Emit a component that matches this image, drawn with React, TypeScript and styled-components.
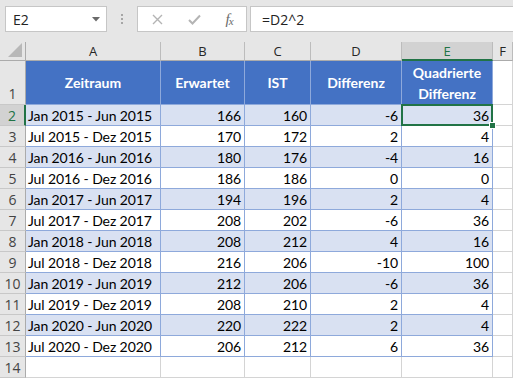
import styled, { createGlobalStyle } from "styled-components";

const GlobalStyle = createGlobalStyle`
  html, body {
    margin: 0;
    padding: 0;
    background: #ffffff;
    overflow: hidden;
  }
`;

const rows: [string, number, number, number, number][] = [
  ["Jan 2015 - Jun 2015", 166, 160, -6, 36],
  ["Jul 2015 - Dez 2015", 170, 172, 2, 4],
  ["Jan 2016 - Jun 2016", 180, 176, -4, 16],
  ["Jul 2016 - Dez 2016", 186, 186, 0, 0],
  ["Jan 2017 - Jun 2017", 194, 196, 2, 4],
  ["Jul 2017 - Dez 2017", 208, 202, -6, 36],
  ["Jan 2018 - Jun 2018", 208, 212, 4, 16],
  ["Jul 2018 - Dez 2018", 216, 206, -10, 100],
  ["Jan 2019 - Jun 2019", 212, 206, -6, 36],
  ["Jul 2019 - Dez 2019", 208, 210, 2, 4],
  ["Jan 2020 - Jun 2020", 220, 222, 2, 4],
  ["Jul 2020 - Dez 2020", 206, 212, 6, 36],
];

const columns = ["A", "B", "C", "D", "E", "F"];

// page

const Sheet = styled.div`
  width: 513px;
  height: 378px;
  display: flex;
  flex-direction: column;
  background: #ffffff;
  overflow: hidden;
`;

// formula bar

const FormulaBar = styled.div`
  display: flex;
  align-items: flex-start;
  height: 42px;
  padding: 6px 0 0 5px;
  box-sizing: border-box;
  background: #e6e6e6;
  font-family: "Open Sans", "DejaVu Sans", sans-serif;
`;

const NameBox = styled.div`
  display: flex;
  align-items: center;
  justify-content: space-between;
  width: 102px;
  height: 26px;
  box-sizing: border-box;
  padding: 0 6px 0 7px;
  background: #ffffff;
  border: 1px solid #c6c6c6;
  color: #222;
  font-size: 14px;
`;

const Grip = styled.div`
  display: flex;
  flex-direction: column;
  justify-content: center;
  align-items: center;
  gap: 2px;
  width: 30px;
  height: 26px;
`;

const GripDot = styled.span`
  width: 2px;
  height: 2px;
  background: #a6a6a6;
`;

const FxBox = styled.div`
  display: flex;
  align-items: center;
  width: 110px;
  height: 26px;
  box-sizing: border-box;
  background: #ffffff;
  border: 1px solid #c6c6c6;
`;

const FxSlot = styled.div<{ $width: number }>`
  display: flex;
  align-items: center;
  justify-content: center;
  width: ${(p) => p.$width}px;
  height: 100%;
`;

const FxLabel = styled.span`
  font-family: "Liberation Serif", "DejaVu Serif", serif;
  font-style: italic;
  font-size: 15px;
  color: #6b6b6b;
  letter-spacing: -1px;
  sub {
    font-size: 11px;
    vertical-align: -1px;
  }
`;

const FormulaInput = styled.div`
  flex: 1;
  display: flex;
  align-items: center;
  height: 26px;
  margin-left: 3px;
  padding-left: 11px;
  box-sizing: border-box;
  background: #ffffff;
  border: 1px solid #c6c6c6;
  border-right: none;
  color: #222;
  font-size: 14px;
`;

// grid

const Grid = styled.div`
  display: grid;
  grid-template-columns: 26px 135px 84px 66px 91px 91px 20px;
  grid-template-rows: 19px 44px repeat(13, 21px);
`;

const Corner = styled.div`
  background: #e6e6e6;
  border-right: 1px solid #ababab;
  border-bottom: 1px solid #ababab;
  box-sizing: border-box;
  display: flex;
  align-items: flex-end;
  justify-content: flex-end;
  padding: 0 3px 3px 0;
`;

const ColHeader = styled.div<{ $active?: boolean }>`
  display: flex;
  align-items: center;
  justify-content: center;
  box-sizing: border-box;
  background: ${(p) => (p.$active ? "#d2d2d2" : "#e6e6e6")};
  color: ${(p) => (p.$active ? "#217346" : "#262626")};
  border-right: 1px solid #bcbcbc;
  border-bottom: ${(p) => (p.$active ? "2px solid #217346" : "1px solid #ababab")};
  font-family: "Open Sans", "DejaVu Sans", sans-serif;
  font-size: 13px;
  padding-top: ${(p) => (p.$active ? "1px" : "0")};
`;

const RowHeader = styled.div<{ $active?: boolean; $bottom?: boolean }>`
  display: flex;
  align-items: ${(p) => (p.$bottom ? "flex-end" : "center")};
  justify-content: center;
  box-sizing: border-box;
  padding-bottom: ${(p) => (p.$bottom ? "1px" : "0")};
  background: ${(p) => (p.$active ? "#d2d2d2" : "#e6e6e6")};
  color: ${(p) => (p.$active ? "#217346" : "#444444")};
  border-right: ${(p) => (p.$active ? "2px solid #217346" : "1px solid #ababab")};
  border-bottom: 1px solid #c8c8c8;
  font-family: "Open Sans", "DejaVu Sans", sans-serif;
  font-size: 14px;
`;

const HeadCell = styled.div`
  display: flex;
  align-items: center;
  justify-content: center;
  text-align: center;
  box-sizing: border-box;
  background: #4472c4;
  color: #ffffff;
  border-right: 1px solid #8ea9db;
  border-bottom: 1px solid #8ea9db;
  font-family: Lato, "Liberation Sans", sans-serif;
  font-weight: 700;
  font-size: 14px;
  line-height: 21px;
`;

const Cell = styled.div<{ $band?: boolean; $num?: boolean; $selected?: boolean }>`
  position: relative;
  display: flex;
  align-items: center;
  justify-content: ${(p) => (p.$num ? "flex-end" : "flex-start")};
  box-sizing: border-box;
  padding: 0 3px 0 2px;
  background: ${(p) => (p.$band ? "#d9e1f2" : "#ffffff")};
  color: #000000;
  border-right: 1px solid #8ea9db;
  border-bottom: 1px solid #8ea9db;
  font-family: Lato, "Liberation Sans", sans-serif;
  font-size: 14px;
  letter-spacing: -0.1px;
  white-space: nowrap;
  ${(p) =>
    p.$selected &&
    `
    &::after {
      content: "";
      position: absolute;
      inset: -1px -1px -1px -1px;
      border: 2px solid #217346;
    }
  `}
`;

const FillHandle = styled.span`
  position: absolute;
  right: -4px;
  bottom: -4px;
  width: 5px;
  height: 5px;
  background: #217346;
  border: 1px solid #ffffff;
  z-index: 2;
`;

const EmptyCell = styled.div`
  box-sizing: border-box;
  background: #ffffff;
  border-right: 1px solid #d4d4d4;
  border-bottom: 1px solid #d4d4d4;
`;

export default function App() {
  return (
    <Sheet>
      <GlobalStyle />
      <FormulaBar>
        <NameBox>
          <span>E2</span>
          <svg width="8" height="5" viewBox="0 0 8 5">
            <path d="M0 0 H8 L4 4.5 Z" fill="#6a6a6a" />
          </svg>
        </NameBox>
        <Grip>
          <GripDot />
          <GripDot />
          <GripDot />
        </Grip>
        <FxBox>
          <FxSlot $width={38}>
            <svg width="11" height="11" viewBox="0 0 11 11">
              <path d="M1 1 L10 10 M10 1 L1 10" stroke="#b4b4b4" strokeWidth="1.4" />
            </svg>
          </FxSlot>
          <FxSlot $width={36}>
            <svg width="13" height="11" viewBox="0 0 13 11">
              <path d="M1 6 L4.5 9.5 L12 1.5" stroke="#b4b4b4" strokeWidth="2" fill="none" />
            </svg>
          </FxSlot>
          <FxSlot $width={34}>
            <FxLabel>
              f<sub>x</sub>
            </FxLabel>
          </FxSlot>
        </FxBox>
        <FormulaInput>=D2^2</FormulaInput>
      </FormulaBar>

      <Grid>
        <Corner>
          <svg width="14" height="14" viewBox="0 0 14 14">
            <path d="M14 0 V14 H0 Z" fill="#b8b8b8" />
          </svg>
        </Corner>
        {columns.map((c) => (
          <ColHeader key={c} $active={c === "E"}>
            {c}
          </ColHeader>
        ))}

        <RowHeader $bottom>1</RowHeader>
        <HeadCell>Zeitraum</HeadCell>
        <HeadCell>Erwartet</HeadCell>
        <HeadCell>IST</HeadCell>
        <HeadCell>Differenz</HeadCell>
        <HeadCell>
          Quadrierte
          <br />
          Differenz
        </HeadCell>
        <EmptyCell />

        {rows.map((r, i) => {
          const band = i % 2 === 0;
          return [
            <RowHeader key={`h${i}`} $active={i === 0}>
              {i + 2}
            </RowHeader>,
            <Cell key={`a${i}`} $band={band}>
              {r[0]}
            </Cell>,
            <Cell key={`b${i}`} $band={band} $num>
              {r[1]}
            </Cell>,
            <Cell key={`c${i}`} $band={band} $num>
              {r[2]}
            </Cell>,
            <Cell key={`d${i}`} $band={band} $num>
              {r[3]}
            </Cell>,
            <Cell key={`e${i}`} $band={band} $num $selected={i === 0}>
              {r[4]}
              {i === 0 && <FillHandle />}
            </Cell>,
            <EmptyCell key={`f${i}`} />,
          ];
        })}

        <RowHeader>14</RowHeader>
        <EmptyCell />
        <EmptyCell />
        <EmptyCell />
        <EmptyCell />
        <EmptyCell />
        <EmptyCell />
      </Grid>
    </Sheet>
  );
}
